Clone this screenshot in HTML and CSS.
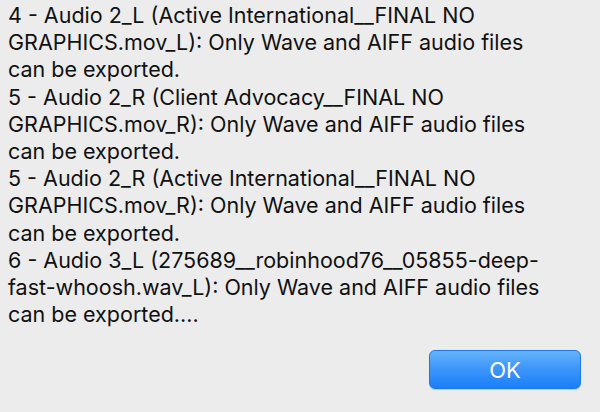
FILE: index.html
```html
<!DOCTYPE html>
<html>
<head>
<meta charset="utf-8">
<link rel="stylesheet" href="styles.css">
</head>
<body>
<div class="dialog">
  <div class="message">
    <div class="line">4 - Audio 2_L (Active International__FINAL NO</div>
    <div class="line">GRAPHICS.mov_L): Only Wave and AIFF audio files</div>
    <div class="line">can be exported.</div>
    <div class="line">5 - Audio 2_R (Client Advocacy__FINAL NO</div>
    <div class="line">GRAPHICS.mov_R): Only Wave and AIFF audio files</div>
    <div class="line">can be exported.</div>
    <div class="line">5 - Audio 2_R (Active International__FINAL NO</div>
    <div class="line">GRAPHICS.mov_R): Only Wave and AIFF audio files</div>
    <div class="line">can be exported.</div>
    <div class="line">6 - Audio 3_L (275689__robinhood76__05855-deep-</div>
    <div class="line">fast-whoosh.wav_L): Only Wave and AIFF audio files</div>
    <div class="line">can be exported....</div>
  </div>
  <div class="actions">
    <button class="ok">OK</button>
  </div>
</div>
</body>
</html>
```
FILE: styles.css
```css
html, body {
  margin: 0;
  padding: 0;
  background: #ececec;
  width: 600px;
  height: 412px;
  overflow: hidden;
}
.dialog {
  padding: 2px 0 0 8px;
  font-family: "Inter", "Liberation Sans", Arial, sans-serif;
  color: #111111;
}
.message {
  font-size: 21.5px;
  line-height: 27.2px;
  white-space: nowrap;
}
.actions {
  display: flex;
  justify-content: flex-end;
  padding-right: 19px;
  margin-top: 22px;
}
.ok {
  width: 152px;
  height: 39px;
  border: 1px solid #1f78e8;
  border-radius: 6px;
  background: linear-gradient(to bottom, #67b3fc 0%, #3f97fb 45%, #1a7ff8 100%);
  color: #ffffff;
  font-family: "Inter", "Liberation Sans", Arial, sans-serif;
  font-size: 22px;
  padding: 0;
  box-shadow: 0 0.5px 1px rgba(0,0,0,0.15);
}
```
